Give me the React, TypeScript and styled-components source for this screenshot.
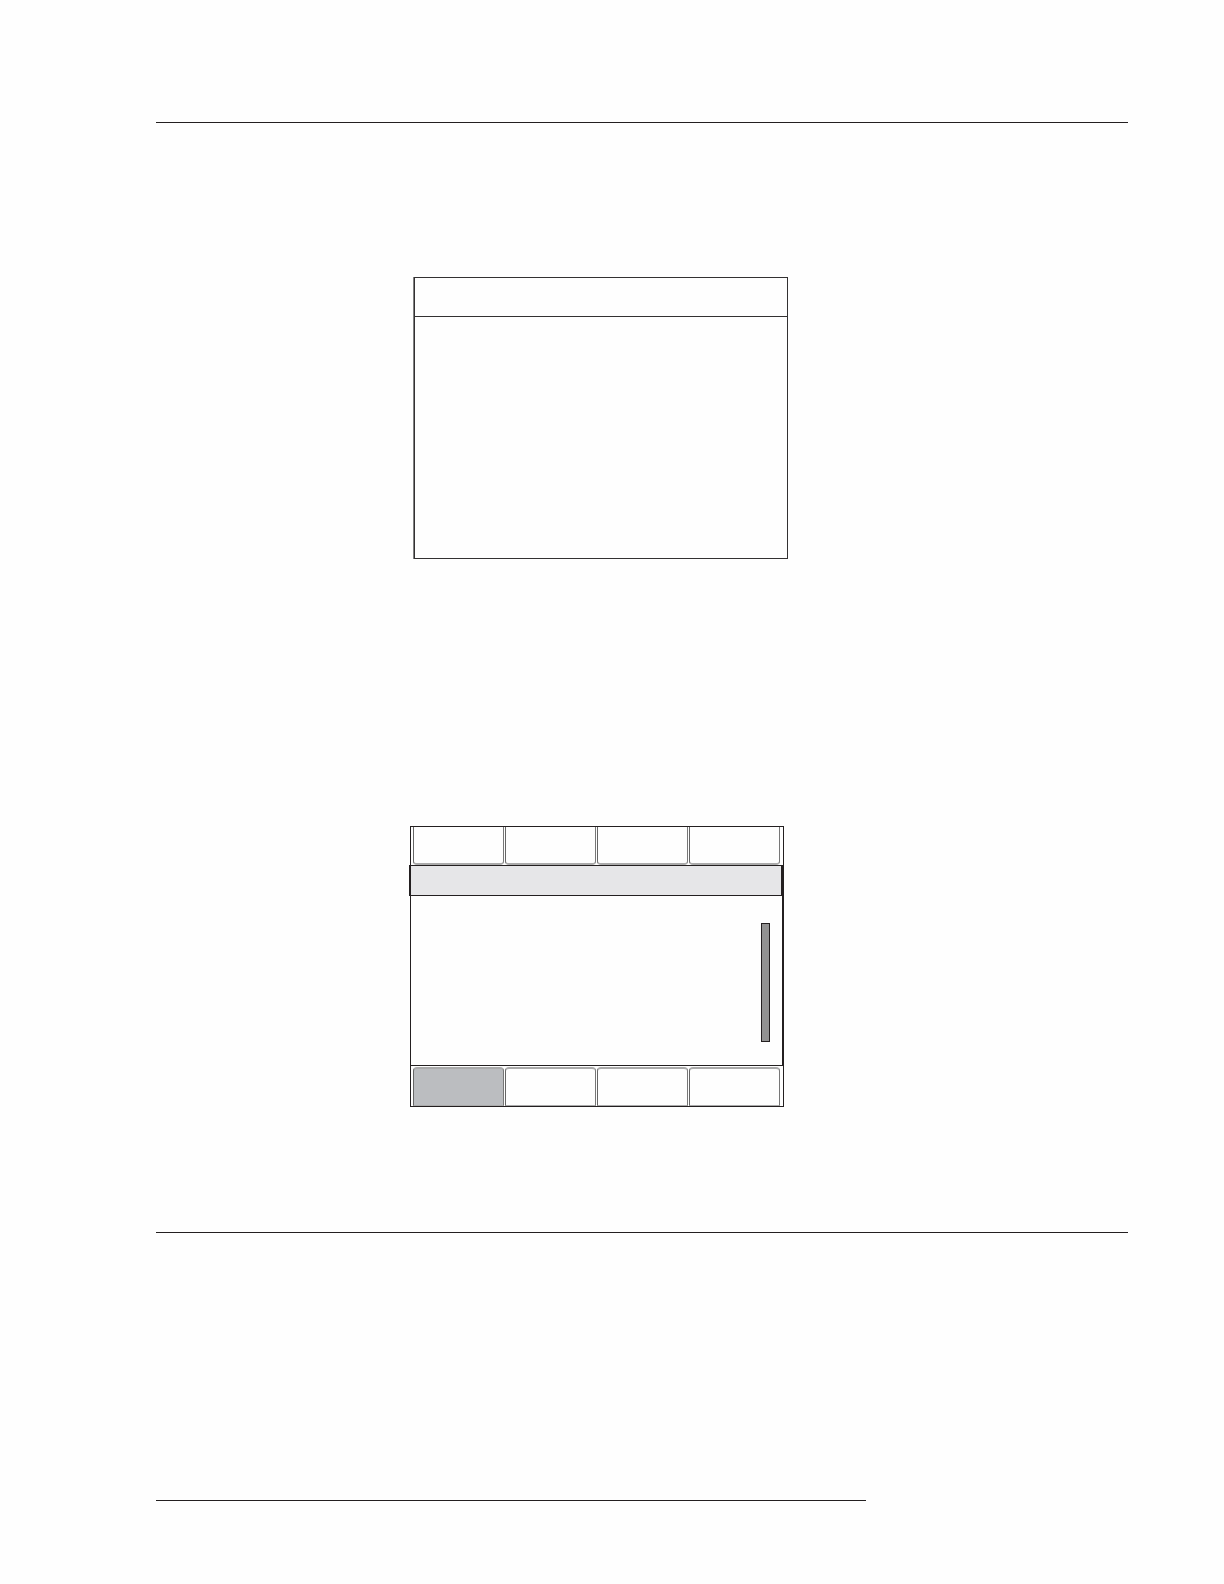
import React, { useState } from "react";
import styled, { createGlobalStyle } from "styled-components";

const ink = "#231f20";

const GlobalStyle = createGlobalStyle`
  *, *::before, *::after { box-sizing: border-box; }
  body {
    margin: 0;
    background: #fefefe;
    color: ${ink};
    font-family: "Liberation Sans", Arial, sans-serif;
  }
`;

const Page = styled.main`
  display: flex;
  flex-direction: column;
  padding: 122px 96px 83px 156px;
`;

const Rule = styled.hr<{ $width?: string }>`
  width: ${({ $width }) => $width ?? "100%"};
  height: 1px;
  margin: 0;
  border: 0;
  background: ${ink};
`;

const Figures = styled.section`
  display: flex;
  flex-direction: column;
  gap: 267px;
  padding: 154px 0 125px 253px;
`;

const MessageScreen = styled.article`
  width: 374px;
  max-width: 100%;
  margin-left: 5px;
  border: 1px solid #333132;
  box-shadow: -1px 0 0 #808080;
`;

const MessageHeader = styled.header`
  height: 39px;
  border-bottom: 1px solid #333132;
`;

const MessageBody = styled.div`
  height: 241px;
`;

const MenuScreen = styled.article`
  width: 375px;
  max-width: 100%;
`;

const TabRow = styled.nav<{ $edge: "top" | "bottom" }>`
  display: grid;
  grid-template-columns: repeat(4, minmax(0, 1fr));
  gap: 1px;
  height: ${({ $edge }) => ($edge === "top" ? 39 : 41)}px;
  margin-left: 1px;
  padding: ${({ $edge }) => ($edge === "top" ? "0 3px 0 2px" : "1px 3px 0 2px")};
  border: solid ${ink};
  border-width: ${({ $edge }) => ($edge === "top" ? "1px 1px 0" : "0 1px 1px")};
`;

const Tab = styled.button<{ $edge: "top" | "bottom" }>`
  min-width: 0;
  padding: 0;
  border: 1px solid #aaa;
  border-left-color: #666;
  border-right-color: #777;
  border-width: ${({ $edge }) => ($edge === "top" ? "0 1px 2px" : "2px 1px 1px")};
  border-radius: ${({ $edge }) => ($edge === "top" ? "0 0 4px 4px" : "4px 4px 0 0")};
  background: transparent;

  &[aria-pressed="true"] {
    background: #bbbdc0;
  }
`;

const TitleBar = styled.header`
  height: 31px;
  border: 1px solid ${ink};
  border-width: 1px 3px 1px 2px;
  background: #e6e6e8;
`;

const ListArea = styled.div`
  display: flex;
  justify-content: flex-end;
  height: 170px;
  margin-left: 1px;
  padding: 27px 12px 23px 0;
  border: 1px solid ${ink};
  border-top: 0;
  border-right-width: 2px;
`;

const ScrollThumb = styled.div`
  width: 9px;
  border: 1px solid ${ink};
  background: #929292;
`;

const Notes = styled.section`
  height: 267px;
`;

const topKeys = [1, 2, 3, 4];
const bottomKeys = [5, 6, 7, 8];

export default function App() {
  const [selected, setSelected] = useState(5);

  const renderKeys = (keys: number[], edge: "top" | "bottom") => (
    <TabRow $edge={edge} aria-label={`${edge} keys`}>
      {keys.map((key) => (
        <Tab
          key={key}
          type="button"
          $edge={edge}
          aria-label={`Key ${key}`}
          aria-pressed={key === selected}
          onClick={() => setSelected(key)}
        />
      ))}
    </TabRow>
  );

  return (
    <>
      <GlobalStyle />
      <Page>
        <Rule />
        <Figures>
          <MessageScreen>
            <MessageHeader />
            <MessageBody />
          </MessageScreen>
          <MenuScreen>
            {renderKeys(topKeys, "top")}
            <TitleBar />
            <ListArea>
              <ScrollThumb />
            </ListArea>
            {renderKeys(bottomKeys, "bottom")}
          </MenuScreen>
        </Figures>
        <Rule />
        <Notes />
        <Rule $width="73%" />
      </Page>
    </>
  );
}
